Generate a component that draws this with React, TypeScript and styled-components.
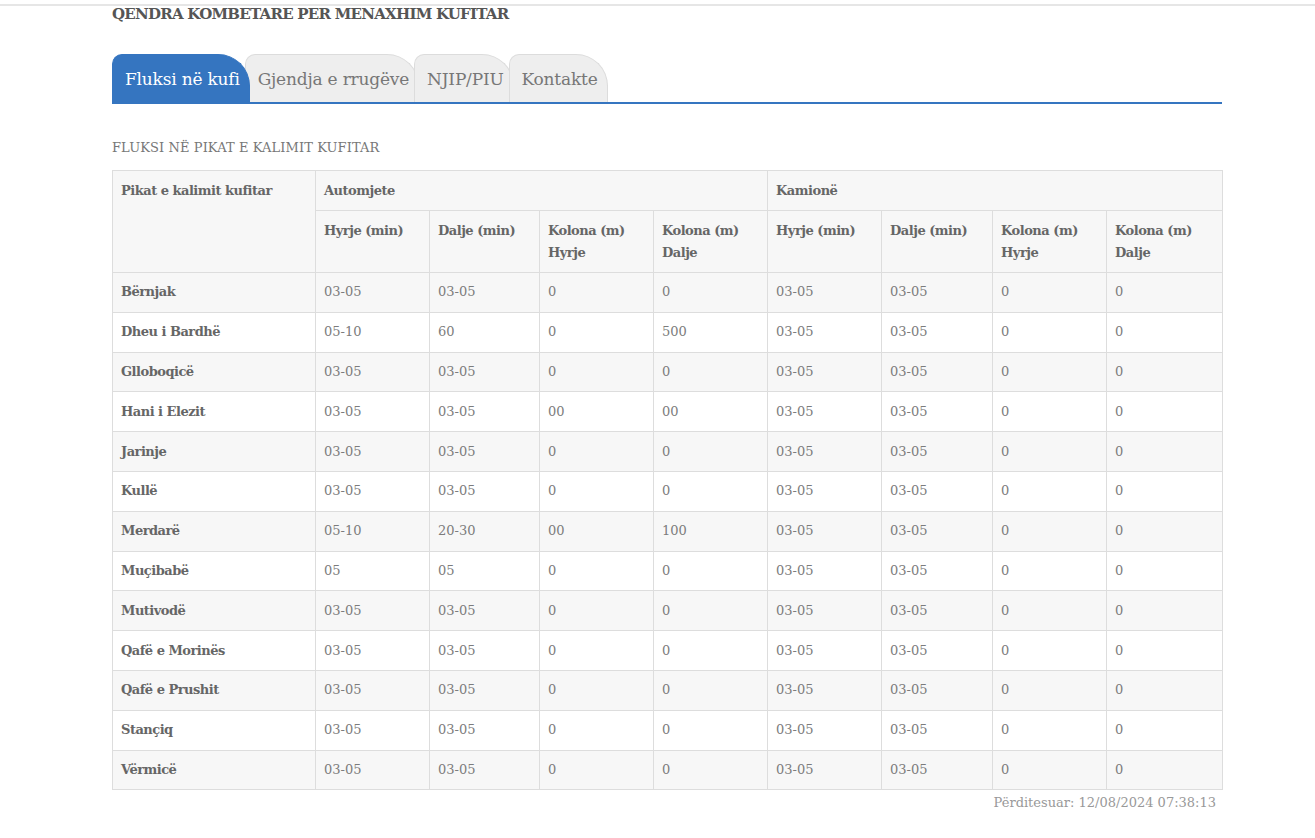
import React from "react";
import styled, { createGlobalStyle } from "styled-components";

const Global = createGlobalStyle`
  html, body { margin: 0; padding: 0; background: #fff; }
  body { font-family: "DejaVu Serif", "Liberation Serif", serif; color: #666; }
`;

const TopRule = styled.div`
  height: 4px;
  border-bottom: 2px solid #e6e6e6;
`;

const Container = styled.div`
  width: 1110px;
  margin-left: 112px;
`;

const SiteTitle = styled.h1`
  margin: 0;
  font-size: 15px;
  line-height: 16px;
  font-weight: bold;
  color: #555;
  letter-spacing: -0.75px;
`;

const TabBar = styled.nav`
  display: flex;
  margin-top: 32px;
  border-bottom: 2px solid #3575c0;
  height: 48px;
  align-items: flex-end;
`;

const Tab = styled.div<{ $active?: boolean }>`
  position: relative;
  z-index: ${(p) => (p.$active ? 2 : 1)};
  height: 48px;
  box-sizing: border-box;
  padding: 13px 9px 0 12px;
  margin-right: -5px;
  border: 1px solid ${(p) => (p.$active ? "#3575c0" : "#dcdcdc")};
  border-bottom: none;
  border-radius: 10px 32px 0 0;
  background: ${(p) => (p.$active ? "#3575c0" : "#eeeeee")};
  color: ${(p) => (p.$active ? "#fff" : "#777")};
  font-size: 17px;
  line-height: 22px;
  letter-spacing: -0.2px;
  white-space: nowrap;
`;

const SectionTitle = styled.h2`
  margin: 36px 0 14px;
  font-size: 13px;
  line-height: 16px;
  font-weight: normal;
  color: #777;
  letter-spacing: 0.1px;
`;

const Table = styled.table`
  width: 1110px;
  border-collapse: collapse;
  table-layout: fixed;
  font-size: 13px;
`;

const HeadCell = styled.th`
  text-align: left;
  vertical-align: top;
  border: 1px solid #dddddd;
  background: #f7f7f7;
  padding: 9px 8px 8px;
  line-height: 22px;
  font-weight: bold;
  color: #666;
  letter-spacing: -0.5px;
`;

const Row = styled.tr<{ $shade: boolean }>`
  background: ${(p) => (p.$shade ? "#f7f7f7" : "#fff")};
  height: 39.8px;
`;

const NameCell = styled.th`
  text-align: left;
  border: 1px solid #dddddd;
  padding: 0 8px;
  font-weight: bold;
  color: #666;
  line-height: 22px;
  letter-spacing: -0.5px;
`;

const DataCell = styled.td`
  border: 1px solid #dddddd;
  padding: 0 8px;
  color: #7c7c7c;
  line-height: 22px;
`;

const Updated = styled.div`
  text-align: right;
  padding-right: 6px;
  margin-top: 5px;
  font-size: 13px;
  color: #999;
`;

const tabs = ["Fluksi në kufi", "Gjendja e rrugëve", "NJIP/PIU", "Kontakte"];

const rows: [string, string[]][] = [
  ["Bërnjak", ["03-05", "03-05", "0", "0", "03-05", "03-05", "0", "0"]],
  ["Dheu i Bardhë", ["05-10", "60", "0", "500", "03-05", "03-05", "0", "0"]],
  ["Glloboqicë", ["03-05", "03-05", "0", "0", "03-05", "03-05", "0", "0"]],
  ["Hani i Elezit", ["03-05", "03-05", "00", "00", "03-05", "03-05", "0", "0"]],
  ["Jarinje", ["03-05", "03-05", "0", "0", "03-05", "03-05", "0", "0"]],
  ["Kullë", ["03-05", "03-05", "0", "0", "03-05", "03-05", "0", "0"]],
  ["Merdarë", ["05-10", "20-30", "00", "100", "03-05", "03-05", "0", "0"]],
  ["Muçibabë", ["05", "05", "0", "0", "03-05", "03-05", "0", "0"]],
  ["Mutivodë", ["03-05", "03-05", "0", "0", "03-05", "03-05", "0", "0"]],
  ["Qafë e Morinës", ["03-05", "03-05", "0", "0", "03-05", "03-05", "0", "0"]],
  ["Qafë e Prushit", ["03-05", "03-05", "0", "0", "03-05", "03-05", "0", "0"]],
  ["Stançiq", ["03-05", "03-05", "0", "0", "03-05", "03-05", "0", "0"]],
  ["Vërmicë", ["03-05", "03-05", "0", "0", "03-05", "03-05", "0", "0"]],
];

const colWidths = [203, 114, 110, 114, 114, 114, 111, 114, 116];

const SubHeads = () => (
  <>
    <HeadCell>Hyrje (min)</HeadCell>
    <HeadCell>Dalje (min)</HeadCell>
    <HeadCell>Kolona (m)<br />Hyrje</HeadCell>
    <HeadCell>Kolona (m)<br />Dalje</HeadCell>
  </>
);

export default function App() {
  return (
    <>
      <Global />
      <TopRule />
      <Container>
        <SiteTitle>QENDRA KOMBETARE PER MENAXHIM KUFITAR</SiteTitle>
        <TabBar>
          {tabs.map((t, i) => (
            <Tab key={t} $active={i === 0}>{t}</Tab>
          ))}
        </TabBar>
        <SectionTitle>FLUKSI NË PIKAT E KALIMIT KUFITAR</SectionTitle>
        <Table>
          <colgroup>
            {colWidths.map((w, i) => (
              <col key={i} style={{ width: w }} />
            ))}
          </colgroup>
          <thead>
            <tr>
              <HeadCell rowSpan={2}>Pikat e kalimit kufitar</HeadCell>
              <HeadCell colSpan={4}>Automjete</HeadCell>
              <HeadCell colSpan={4}>Kamionë</HeadCell>
            </tr>
            <tr>
              <SubHeads />
              <SubHeads />
            </tr>
          </thead>
          <tbody>
            {rows.map(([name, vals], i) => (
              <Row key={name} $shade={i % 2 === 0}>
                <NameCell>{name}</NameCell>
                {vals.map((v, j) => (
                  <DataCell key={j}>{v}</DataCell>
                ))}
              </Row>
            ))}
          </tbody>
        </Table>
        <Updated>Përditesuar: 12/08/2024 07:38:13</Updated>
      </Container>
    </>
  );
}
